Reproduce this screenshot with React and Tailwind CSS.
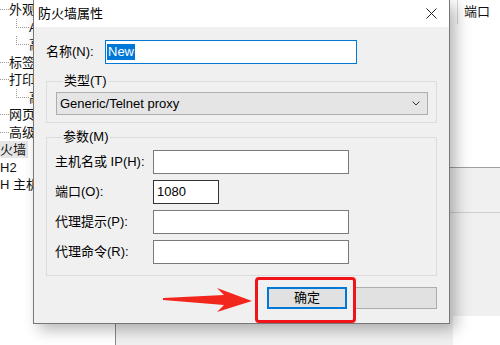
import React from "react";

const font = { fontFamily: '"Liberation Sans", "Noto Sans CJK SC", sans-serif' };

const treeRows = [
  { text: "外观", level: 0 },
  { text: "A", level: 1 },
  { text: "高", level: 1 },
  { text: "标签", level: 0 },
  { text: "打印", level: 0 },
  { text: "高", level: 1 },
  { text: "网页", level: 0 },
  { text: "高级", level: 0 },
  { text: "火墙", level: -1, selected: true },
  { text: "H2", level: -1 },
  { text: "H 主机", level: -1 },
];

const TreePanel = () => (
  <div className="w-[116px] h-full bg-white border-r border-[#8a8a8a] pt-[1px] text-[13px] text-[#111]">
    {treeRows.map((row, i) => (
      <div key={i} className="h-[17.5px] flex items-center whitespace-nowrap">
        {row.level === 0 && (
          <span className="w-[9px] h-[9px] shrink-0 border-b border-dotted border-[#999] mr-[0px] -translate-y-[4px]" />
        )}
        {row.level === 1 && (
          <span className="ml-[16px] w-[13px] h-[17.5px] shrink-0 flex flex-col">
            <span className="h-[9px] border-l border-b border-dotted border-[#999]" />
          </span>
        )}
        <span className={row.selected ? "bg-[#e6e6e6] pr-[2px] leading-[17px]" : "leading-[17px]"}>
          {row.text}
        </span>
      </div>
    ))}
  </div>
);

const Background = () => (
  <div className="flex w-full h-full">
    <TreePanel />
    <div className="flex-1 flex flex-col">
      <div className="h-[168px] bg-white border-b border-[#a0a0a0] flex flex-col">
        <div className="h-[24px] flex items-center">
          <div className="w-[342px] h-full border-r border-[#d8d8d8]" />
          <span className="pl-[6px] text-[13px] text-[#111]">端口</span>
        </div>
      </div>
      <div className="h-[45px] bg-[#f0f0f0] border-b border-[#cfcfcf]" />
      <div className="flex-1 bg-[#f0f0f0] flex flex-col">
        <div className="h-[103px]" />
        <div className="flex-1 flex justify-end">
          <div className="w-[47px] bg-white" />
        </div>
      </div>
    </div>
  </div>
);

const TextBox = ({ w = "w-[196px]", value, dark }) => (
  <div
    className={`${w} h-[24px] bg-white border flex items-center px-[3px] text-[13px] text-black ${
      dark ? "border-[#333]" : "border-[#7a7a7a]"
    }`}
  >
    {value}
  </div>
);

const params = [
  { label: "主机名或 IP(H):" },
  { label: "端口(O):", value: "1080", w: "w-[66px]", dark: true },
  { label: "代理提示(P):" },
  { label: "代理命令(R):" },
];

const Dialog = () => (
  <div className="absolute left-[33px] top-0 w-[417px] h-[324px] flex flex-col bg-[#f0f0f0] border-l border-r border-b border-[#777] shadow-[6px_6px_14px_rgba(0,0,0,0.28)]">
    <div className="h-[27px] bg-white flex items-center justify-between pl-[4px] pr-[12px]">
      <span className="text-[13px] text-black">防火墙属性</span>
      <svg width="11" height="11" viewBox="0 0 11 11">
        <path d="M0.5 0.5 L10.5 10.5 M10.5 0.5 L0.5 10.5" stroke="#222" strokeWidth="1" fill="none" />
      </svg>
    </div>
    <div className="flex-1 flex flex-col pl-[12px] pr-[12px] text-[13px] text-black">
      <div className="flex items-center mt-[13px]">
        <span className="w-[59px]">名称(N):</span>
        <div className="w-[252px] h-[24px] bg-white border border-[#0078d7] flex items-center px-[1px]">
          <span className="bg-[#0078d7] text-white leading-[16px] px-[1px]">New</span>
        </div>
      </div>

      <fieldset className="mt-[10px] border border-[#dcdcdc] pl-[9px] pr-[8px] pb-[7px]">
        <legend className="ml-[7px] px-[1px] leading-[14px]">类型(T)</legend>
        <div className="mt-[4px] h-[23px] bg-[#e5e5e5] border border-[#adadad] flex items-center justify-between pl-[3px] pr-[7px]">
          <span>Generic/Telnet proxy</span>
          <svg width="8" height="5" viewBox="0 0 8 5">
            <path d="M0.5 0.5 L4 4 L7.5 0.5" stroke="#333" strokeWidth="1" fill="none" />
          </svg>
        </div>
      </fieldset>

      <fieldset className="mt-[7px] border border-[#dcdcdc] pl-[8px] pb-[11px]">
        <legend className="ml-[7px] px-[1px] leading-[14px]">参数(M)</legend>
        <div className="mt-[6px] flex flex-col gap-[6px]">
          {params.map((p, i) => (
            <div key={i} className="flex items-center">
              <span className="w-[98px] whitespace-nowrap">{p.label}</span>
              <TextBox w={p.w} value={p.value} dark={p.dark} />
            </div>
          ))}
        </div>
      </fieldset>

      <div className="mt-[11px] flex justify-end gap-[8px]">
        <div className="w-[80px] h-[22px] bg-[#e1e1e1] border-2 border-[#0078d7] flex items-center justify-center">
          确定
        </div>
        <div className="w-[82px] h-[22px] bg-[#e1e1e1] border border-[#adadad]" />
      </div>
    </div>
  </div>
);

export default function App() {
  return (
    <div className="relative w-[500px] h-[345px] overflow-hidden bg-white" style={font}>
      <Background />
      <Dialog />
      <div className="absolute left-[255px] top-[277px] w-[101px] h-[46px] border-[3px] border-[#f0141a] rounded-[4px]" />
      <svg className="absolute left-0 top-0" width="500" height="345" viewBox="0 0 500 345">
        <polygon
          points="163,298 224,295 217,288 252,301 217,312 224,305 163,300"
          fill="#f2261d"
        />
      </svg>
    </div>
  );
}
